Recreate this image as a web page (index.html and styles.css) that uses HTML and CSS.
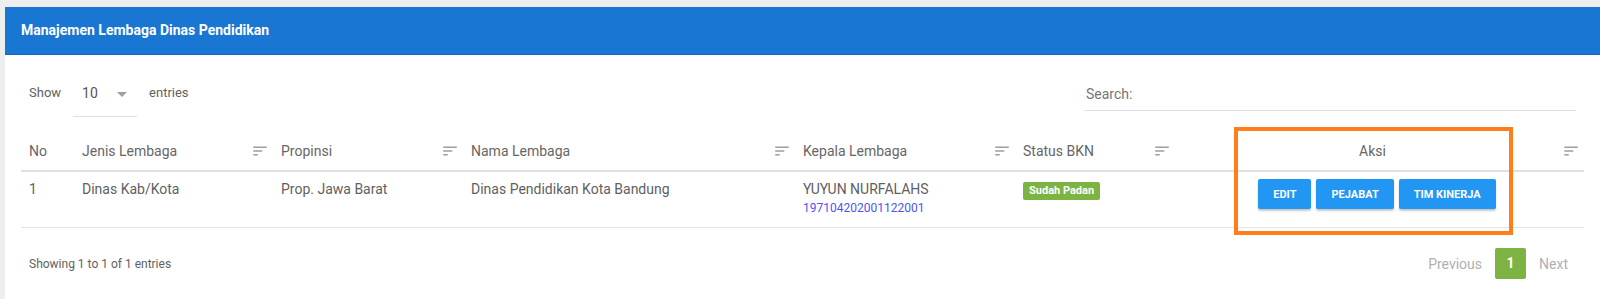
FILE: index.html
```html
<!doctype html>
<html>
<head>
<meta charset="utf-8">
<meta name="viewport" content="width=device-width, initial-scale=1.0">
<link rel="stylesheet" href="styles.css">
<title>Manajemen Lembaga Dinas Pendidikan</title>
</head>
<body>
<div class="card">
  <div class="card-header">Manajemen Lembaga Dinas Pendidikan</div>
  <div class="card-body">
    <div class="toolbar">
      <div class="length">
        <span>Show</span>
        <div class="select"><span>10</span><span class="caret"></span></div>
        <span>entries</span>
      </div>
      <div class="search">Search:</div>
    </div>

    <table class="grid">
      <colgroup>
        <col style="width:53px">
        <col style="width:199px">
        <col style="width:190px">
        <col style="width:332px">
        <col style="width:220px">
        <col style="width:160px">
        <col>
      </colgroup>
      <thead>
        <tr>
          <th><div class="th-in"><span>No</span></div></th>
          <th><div class="th-in"><span>Jenis Lembaga</span><svg class="sort" viewBox="0 0 24 24"><path d="M3 18h6v-2H3v2zM3 6v2h18V6H3zm0 7h12v-2H3v2z"/></svg></div></th>
          <th><div class="th-in"><span>Propinsi</span><svg class="sort" viewBox="0 0 24 24"><path d="M3 18h6v-2H3v2zM3 6v2h18V6H3zm0 7h12v-2H3v2z"/></svg></div></th>
          <th><div class="th-in"><span>Nama Lembaga</span><svg class="sort" viewBox="0 0 24 24"><path d="M3 18h6v-2H3v2zM3 6v2h18V6H3zm0 7h12v-2H3v2z"/></svg></div></th>
          <th><div class="th-in"><span>Kepala Lembaga</span><svg class="sort" viewBox="0 0 24 24"><path d="M3 18h6v-2H3v2zM3 6v2h18V6H3zm0 7h12v-2H3v2z"/></svg></div></th>
          <th><div class="th-in"><span>Status BKN</span><svg class="sort" viewBox="0 0 24 24"><path d="M3 18h6v-2H3v2zM3 6v2h18V6H3zm0 7h12v-2H3v2z"/></svg></div></th>
          <th><div class="th-in"><span class="center">Aksi</span><svg class="sort" viewBox="0 0 24 24"><path d="M3 18h6v-2H3v2zM3 6v2h18V6H3zm0 7h12v-2H3v2z"/></svg></div></th>
        </tr>
      </thead>
      <tbody>
        <tr>
          <td>1</td>
          <td>Dinas Kab/Kota</td>
          <td>Prop. Jawa Barat</td>
          <td>Dinas Pendidikan Kota Bandung</td>
          <td>
            <div>YUYUN NURFALAHS</div>
            <div class="nip">197104202001122001</div>
          </td>
          <td><span class="badge">Sudah Padan</span></td>
          <td class="aksi">
            <div class="buttons">
              <button class="btn">EDIT</button>
              <button class="btn">PEJABAT</button>
              <button class="btn">TIM KINERJA</button>
            </div>
          </td>
        </tr>
      </tbody>
    </table>

    <div class="footer">
      <div class="info">Showing 1 to 1 of 1 entries</div>
      <div class="paging">
        <span class="page-link">Previous</span>
        <span class="page-current">1</span>
        <span class="page-link">Next</span>
      </div>
    </div>
  </div>
  <div class="highlight"></div>
</div>
</body>
</html>
```

FILE: styles.css
```css
html, body {
    margin: 0;
    padding: 0;
}
body {
    font-family: Roboto, "Liberation Sans", Arial, sans-serif;
    background-color: #eeeeee;
    color: #616161;
    padding: 7px 0 0 5px;
    height: 299px;
    box-sizing: border-box;
    overflow: hidden;
}
.card {
    position: relative;
    background-color: #fff;
    height: 100%;
}
.card-header {
    background-color: #1976d2;
    border-bottom: 1px solid #1565c0;
    color: #fff;
    font-size: 14px;
    font-weight: 700;
    height: 47px;
    line-height: 47px;
    padding-left: 16px;
}
.card-body {
    padding: 15px 16px 0 16px;
}

/* top controls */
.toolbar {
    display: flex;
    justify-content: space-between;
    align-items: flex-start;
    height: 48px;
}
.length {
    display: flex;
    align-items: flex-start;
    font-size: 13px;
    padding-left: 8px;
}
.length > span {
    line-height: 20px;
    padding-top: 13px;
}
.select {
    display: flex;
    align-items: center;
    width: 64px;
    height: 47px;
    border-bottom: 1px solid #e0e0e0;
    margin: 0 12px 0 12px;
    font-size: 14px;
    color: #555;
    padding-left: 9px;
    box-sizing: border-box;
}
.caret {
    width: 0;
    height: 0;
    border-left: 5px solid transparent;
    border-right: 5px solid transparent;
    border-top: 5px solid #9e9e9e;
    margin-left: 19px;
    margin-top: 3px;
}
.search {
    width: 490px;
    margin-right: 8px;
    padding-top: 14px;
    padding-left: 2px;
    line-height: 20px;
    height: 20px;
    padding-bottom: 6px;
    border-bottom: 1px solid #e0e0e0;
    font-size: 14px;
    color: #757575;
}

/* table */
.grid {
    width: 100%;
    table-layout: fixed;
    border-collapse: collapse;
    margin-top: 14px;
    font-size: 14px;
}
.grid th {
    font-weight: 400;
    color: #666;
    text-align: left;
    padding: 9px 4px 9px 8px;
    line-height: 20px;
    border-bottom: 2px solid #e0e0e0;
}
.th-in {
    display: flex;
    align-items: center;
    justify-content: space-between;
}
.th-in .center {
    flex: 1;
    text-align: center;
}
.sort {
    width: 18px;
    height: 18px;
    fill: #9e9e9e;
    flex: none;
}
.grid td {
    vertical-align: top;
    padding: 7px 8px 10px 8px;
    line-height: 20px;
    border-bottom: 1px solid #e5e5e5;
    color: #5f5f5f;
}
.nip {
    font-size: 12px;
    line-height: 18px;
    color: #4f55f2;
}
.badge {
    display: inline-block;
    margin-top: 2px;
    background-color: #7cb342;
    color: #fff;
    font-size: 11px;
    font-weight: 700;
    line-height: 18px;
    padding: 0 6px;
    border-radius: 2px;
}
.grid td.aksi {
    padding-right: 13px;
}
.buttons {
    display: flex;
    justify-content: center;
    gap: 5px;
}
.btn {
    font-family: Roboto, "Liberation Sans", Arial, sans-serif;
    font-size: 11px;
    font-weight: 700;
    color: #fff;
    background-color: #2196f3;
    border: none;
    border-radius: 2px;
    height: 30px;
    padding: 0 15px;
    box-shadow: 0 2px 2px rgba(0, 0, 0, 0.22);
}

/* bottom */
.footer {
    display: flex;
    justify-content: space-between;
    align-items: center;
    margin-top: 20px;
}
.info {
    font-size: 12px;
    padding-left: 8px;
}
.paging {
    display: flex;
    align-items: center;
    font-size: 14px;
    gap: 13px;
    margin-right: 16px;
}
.page-link {
    color: #b0b0b0;
}
.page-current {
    background-color: #7cb342;
    color: #fff;
    font-weight: 700;
    width: 31px;
    height: 31px;
    line-height: 31px;
    text-align: center;
    border-radius: 2px;
}

/* annotation box drawn over the action column */
.highlight {
    position: absolute;
    left: 1229px;
    top: 120px;
    width: 279px;
    height: 108px;
    border: 4px solid #ff7d1a;
    box-sizing: border-box;
}
```
